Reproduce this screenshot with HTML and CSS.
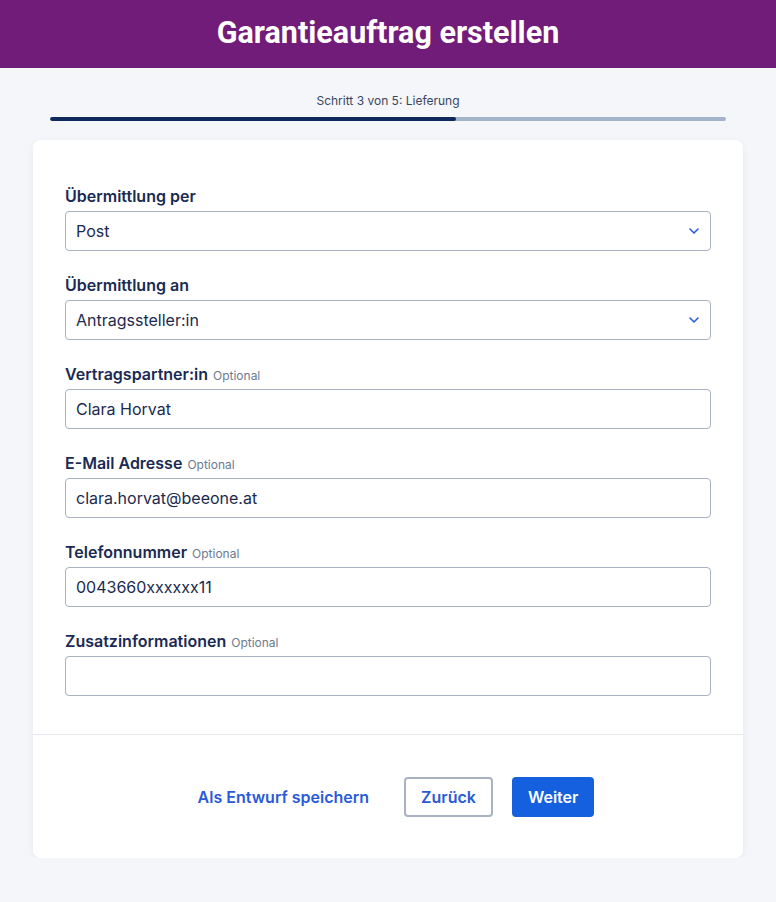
FILE: index.html
```html
<!DOCTYPE html>
<html lang="de">
<head>
    <meta charset="UTF-8">
    <meta name="viewport" content="width=device-width, initial-scale=1.0">
    <title>Garantieauftrag erstellen</title>
    <link rel="stylesheet" href="styles.css">
</head>
<body>
    <header class="topbar">
        <h1>Garantieauftrag erstellen</h1>
    </header>

    <div class="steps">
        <div class="steps-label">Schritt 3 von 5: Lieferung</div>
        <div class="progress"><div class="progress-done" style="width: 60%"></div></div>
    </div>

    <div class="card">
        <div class="card-body">
            <div class="field">
                <label for="per">Übermittlung per</label>
                <div class="select-wrap">
                    <select id="per">
                        <option>Post</option>
                        <option>E-Mail</option>
                    </select>
                    <svg class="chevron" width="10" height="6" viewBox="0 0 10 6"><path d="M1 1l4 4 4-4" fill="none" stroke="#2a5bd7" stroke-width="1.6" stroke-linecap="round" stroke-linejoin="round"/></svg>
                </div>
            </div>

            <div class="field">
                <label for="an">Übermittlung an</label>
                <div class="select-wrap">
                    <select id="an">
                        <option>Antragssteller:in</option>
                        <option>Vertragspartner:in</option>
                    </select>
                    <svg class="chevron" width="10" height="6" viewBox="0 0 10 6"><path d="M1 1l4 4 4-4" fill="none" stroke="#2a5bd7" stroke-width="1.6" stroke-linecap="round" stroke-linejoin="round"/></svg>
                </div>
            </div>

            <div class="field">
                <label for="partner">Vertragspartner:in <span class="opt">Optional</span></label>
                <input type="text" id="partner" value="Clara Horvat">
            </div>

            <div class="field">
                <label for="mail">E-Mail Adresse <span class="opt">Optional</span></label>
                <input type="text" id="mail" value="clara.horvat@beeone.at">
            </div>

            <div class="field">
                <label for="tel">Telefonnummer <span class="opt">Optional</span></label>
                <input type="text" id="tel" value="0043660xxxxxx11">
            </div>

            <div class="field">
                <label for="info">Zusatzinformationen <span class="opt">Optional</span></label>
                <input type="text" id="info" value="">
            </div>
        </div>

        <div class="card-footer">
            <button class="btn btn-link">Als Entwurf speichern</button>
            <button class="btn btn-outline">Zurück</button>
            <button class="btn btn-primary">Weiter</button>
        </div>
    </div>
</body>
</html>
```

FILE: styles.css
```css
body { margin: 0; font-family: Inter, "Noto Sans", sans-serif; background-color: #f4f6fa; color: #1b2a4e; }

.topbar { height: 68px; box-sizing: border-box; padding-bottom: 3px; background-color: #711c79; display: flex; align-items: center; justify-content: center; }
.topbar h1 { margin: 0; font-family: Roboto, "Liberation Sans", sans-serif; font-size: 30.5px; font-weight: 700; color: #fff; }

.steps { padding: 24px 50px 0; }
.steps-label { font-size: 12px; line-height: 18px; color: #3a4660; text-align: center; }
.progress { height: 4px; margin-top: 7px; background-color: #a3b4c8; border-radius: 2px; overflow: hidden; }
.progress-done { height: 100%; background-color: #0e2a5c; border-radius: 2px; }

.card { margin: 19px 33px 0; background-color: #fff; border-radius: 8px; box-shadow: 0 2px 8px rgba(20, 40, 80, 0.06); }
.card-body { padding: 45px 32px 38px; display: flex; flex-direction: column; gap: 23px; }

.field { display: flex; flex-direction: column; gap: 4px; }
.field label { font-size: 16px; line-height: 22px; font-weight: 600; color: #1a2a52; }
.opt { font-size: 12px; line-height: 1; font-weight: 400; color: #6b7a90; margin-left: 1px; }

input, select { box-sizing: border-box; width: 100%; height: 40px; padding: 0 10px; font-family: inherit; font-size: 16px; color: #1b2a4e; background-color: #fff; border: 1px solid #a8b2c2; border-radius: 4px; outline: none; }
select { appearance: none; -webkit-appearance: none; }
.select-wrap { position: relative; }
.chevron { position: absolute; right: 12px; top: 17px; pointer-events: none; }

.card-footer { border-top: 1px solid #e6e9ef; padding: 42px 32px 41px; display: flex; justify-content: center; gap: 19px; }
.btn { height: 40px; padding: 0 16px; font-family: inherit; font-size: 16px; font-weight: 600; border-radius: 4px; cursor: pointer; }
.btn-link { background: none; border: none; color: #2a5bd7; }
.btn-outline { background-color: #fff; border: 2px solid #a8b2c2; color: #2a5bd7; padding: 0 15px; }
.btn-primary { background-color: #1560de; border: none; color: #fff; }
```
